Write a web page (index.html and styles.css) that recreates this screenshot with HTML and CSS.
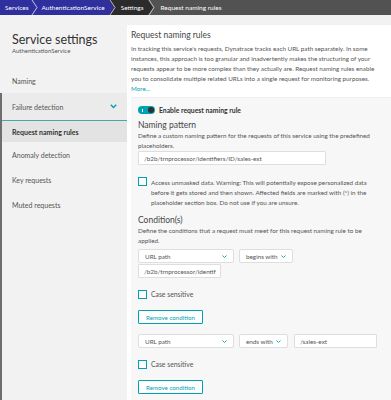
FILE: index.html
```html
<!DOCTYPE html>
<html lang="en">
<head>
  <meta charset="UTF-8">
  <title>Request naming rules</title>
  <link rel="stylesheet" href="styles.css">
</head>
<body>

  <!-- Breadcrumbs -->
  <div class="crumbs">
    <span class="crumb crumb-blue crumb-first">Services</span>
    <svg class="sep" width="8" height="15" viewBox="0 0 8 15"><rect width="8" height="15" fill="#2f2f9e"/><polyline points="1,0 6,7.5 1,15" fill="none" stroke="#d6d6f0" stroke-width="0.9"/></svg>
    <span class="crumb crumb-blue">AuthenticationService</span>
    <svg class="sep" width="9" height="15" viewBox="0 0 9 15"><rect width="9" height="15" fill="#2b2b2b"/><polygon points="0,0 2,0 7,7.5 2,15 0,15" fill="#2f2f9e"/><polyline points="3,0 8,7.5 3,15" fill="none" stroke="#cfcfcf" stroke-width="0.9"/></svg>
    <span class="crumb crumb-dark">Settings</span>
    <svg class="sep" width="9" height="15" viewBox="0 0 9 15"><rect width="9" height="15" fill="#525252"/><polygon points="0,0 2,0 7,7.5 2,15 0,15" fill="#2b2b2b"/><polyline points="3,0 8,7.5 3,15" fill="none" stroke="#cfcfcf" stroke-width="0.9"/></svg>
    <span class="crumb crumb-gray">Request naming rules</span>
  </div>

  <div class="page">
    <aside class="sidebar">
      <div class="side-head">
        <h1>Service settings</h1>
        <div class="side-sub">AuthenticationService</div>
      </div>
      <div class="side-item side-first">Naming</div>
      <div class="side-rest">
        <div class="side-item side-group">
          Failure detection
          <svg width="7" height="5" viewBox="0 0 7 5"><polyline points="0.8,0.8 3.5,3.6 6.2,0.8" fill="none" stroke="#00a1b2" stroke-width="1.4"/></svg>
        </div>
        <div class="side-item side-active">Request naming rules</div>
        <div class="side-item">Anomaly detection</div>
        <div class="side-item">Key requests</div>
        <div class="side-item">Muted requests</div>
      </div>
    </aside>

    <main class="card">
      <h2>Request naming rules</h2>
      <p class="intro">In tracking this service's requests, Dynatrace tracks each URL path separately. In some instances, this approach is too granular and inadvertently makes the structuring of your requests appear to be more complex than they actually are. Request naming rules enable you to consolidate multiple related URLs into a single request for monitoring purposes.<br><a class="more" href="#">More...</a></p>

      <div class="rule">
        <div class="toggle-row">
          <span class="toggle"><span class="knob"></span></span>
          <span class="toggle-label">Enable request naming rule</span>
        </div>

        <h3>Naming pattern</h3>
        <p class="desc">Define a custom naming pattern for the requests of this service using the predefined placeholders.</p>
        <div class="field field-pattern">/b2b/trnprocessor/identifiers/ID/sales-ext</div>

        <div class="check-row check-unmasked">
          <span class="box"></span>
          <span class="check-text">Access unmasked data. Warning: This will potentially expose personalized data before it gets stored and then shown. Affected fields are marked with (*) in the placeholder section box. Do not use if you are unsure.</span>
        </div>

        <h3 class="cond-title">Condition(s)</h3>
        <p class="desc">Define the conditions that a request must meet for this request naming rule to be applied.</p>

        <div class="cond-row">
          <div class="select select-attr">URL path <svg width="5" height="3" viewBox="0 0 5 3"><polyline points="0.5,0.5 2.5,2.5 4.5,0.5" fill="none" stroke="#00a1b2" stroke-width="0.9"/></svg></div>
          <div class="select select-op">begins with <svg width="5" height="3" viewBox="0 0 5 3"><polyline points="0.5,0.5 2.5,2.5 4.5,0.5" fill="none" stroke="#00a1b2" stroke-width="0.9"/></svg></div>
        </div>
        <div class="field field-value">/b2b/trnprocessor/identif</div>

        <div class="check-row check-case">
          <span class="box"></span>
          <span class="check-text">Case sensitive</span>
        </div>
        <button class="remove">Remove condition</button>

        <div class="cond-row cond-second">
          <div class="select select-attr">URL path <svg width="5" height="3" viewBox="0 0 5 3"><polyline points="0.5,0.5 2.5,2.5 4.5,0.5" fill="none" stroke="#00a1b2" stroke-width="0.9"/></svg></div>
          <div class="select select-op2">ends with <svg width="5" height="3" viewBox="0 0 5 3"><polyline points="0.5,0.5 2.5,2.5 4.5,0.5" fill="none" stroke="#00a1b2" stroke-width="0.9"/></svg></div>
          <div class="field field-inline">/sales-ext</div>
        </div>

        <div class="check-row check-case">
          <span class="box"></span>
          <span class="check-text">Case sensitive</span>
        </div>
        <button class="remove">Remove condition</button>
      </div>
    </main>
  </div>

</body>
</html>
```

FILE: styles.css
```css
body {
  margin: 0;
  height: 400px;
  overflow: hidden;
  font-family: 'Lato', sans-serif;
  font-size: 6.5px;
  background-color: #f2f2f2;
  color: #555;
}

/* breadcrumbs */
.crumbs {
  display: flex;
  height: 15px;
  background-color: #525252;
  color: #fff;
}

.crumb {
  display: flex;
  align-items: center;
  padding: 0 2px 0 3px;
}

.crumb-first {
  padding-left: 5px;
}

.crumb-blue {
  background-color: #2f2f9e;
}

.crumb-dark {
  background-color: #2b2b2b;
  padding: 0 3px 0 5px;
}

.crumb-gray {
  padding-left: 5px;
}

.sep {
  display: block;
  flex-shrink: 0;
}

/* layout */
.page {
  display: flex;
  height: 385px;
}

.sidebar {
  width: 127px;
  flex-shrink: 0;
  display: flex;
  flex-direction: column;
}

.side-head {
  padding: 18px 0 0 12px;
}

.side-head h1 {
  margin: 0;
  font-size: 12.5px;
  line-height: 14px;
  font-weight: 400;
  color: #333;
}

.side-sub {
  font-size: 6px;
  line-height: 8px;
  color: #555;
}

.side-item {
  display: flex;
  align-items: center;
  height: 25px;
  padding: 0 10px 0 12px;
  font-size: 7px;
  color: #555;
}

.side-first {
  margin-top: 13px;
}

.side-rest {
  flex: 1;
  border-left: 2px solid #6e6e6e;
}

.side-rest .side-item {
  padding-left: 10px;
}

.side-group {
  height: 27px;
  justify-content: space-between;
  background-color: #ebebeb;
  border-bottom: 1px solid #4aa5b3;
}

.side-active {
  height: 21px;
  background-color: #e3e3e3;
  font-weight: bold;
  color: #333;
}

/* main card */
.card {
  flex: 1;
  margin-top: 10px;
  padding: 4px 0 0 4px;
  background-color: #fff;
  font-size: 6.3px;
}

.card h2 {
  margin: 0 0 3px;
  font-size: 8.5px;
  line-height: 12px;
  font-weight: 400;
  color: #454646;
}

.intro {
  margin: 0;
  padding-right: 6px;
  line-height: 10px;
}

.more {
  color: #00a1b2;
  text-decoration: none;
}

.rule {
  margin-top: 3px;
  padding: 8px 10px 10px 7px;
  background-color: #f7f7f7;
  border-top: 1px solid #efefef;
}

.toggle-row {
  display: flex;
  align-items: center;
  gap: 4px;
  height: 8px;
}

.toggle {
  display: flex;
  align-items: center;
  justify-content: space-between;
  width: 17px;
  height: 8px;
  padding: 0 1px 0 4px;
  box-sizing: border-box;
  border-radius: 4px;
  background-color: #00a1b2;
}

.toggle::before {
  content: "";
  width: 1px;
  height: 3px;
  background-color: #fff;
}

.knob {
  width: 6px;
  height: 6px;
  border-radius: 50%;
  background-color: #2f2f2f;
}

.toggle-label {
  font-size: 6.8px;
  font-weight: bold;
  color: #333;
}

.rule h3 {
  margin: 6px 0 1px;
  font-size: 8.5px;
  line-height: 10px;
  font-weight: 400;
  color: #454646;
}

.rule .cond-title {
  margin-top: 7px;
}

.desc {
  margin: 0;
  line-height: 10px;
}

.field {
  box-sizing: border-box;
  height: 14px;
  display: flex;
  align-items: center;
  padding-left: 5px;
  background-color: #fff;
  border: 1px solid #dedede;
  border-radius: 1px;
  color: #555;
}

.field-pattern {
  width: 188px;
}

.field-value {
  width: 83px;
  margin-top: 1px;
}

.field-inline {
  width: 83px;
  margin-left: 1px;
}

.check-row {
  display: flex;
  align-items: flex-start;
  gap: 4px;
}

.check-unmasked {
  margin-top: 12px;
}

.check-case {
  margin-top: 12px;
}

.box {
  flex-shrink: 0;
  width: 9px;
  height: 9px;
  box-sizing: border-box;
  border: 1px solid #00a1b2;
  background-color: #fff;
}

.check-text {
  margin-top: 1px;
  line-height: 10px;
}

.check-case .check-text {
  margin-top: 0;
  line-height: 9px;
  font-size: 6.8px;
}

.cond-row {
  display: flex;
  gap: 5px;
  margin-top: 3px;
}

.cond-second {
  margin-top: 10px;
}

.select {
  box-sizing: border-box;
  height: 14px;
  display: flex;
  align-items: center;
  justify-content: space-between;
  padding: 0 6px;
  background-color: #fff;
  border: 1px solid #dedede;
  border-radius: 2px;
  color: #555;
}

.select-attr {
  width: 96px;
}

.select-op {
  width: 54px;
}

.select-op2 {
  width: 49px;
}

.remove {
  display: block;
  margin-top: 11px;
  width: 65px;
  height: 14px;
  padding: 0;
  font-family: 'Lato', sans-serif;
  font-size: 6.2px;
  color: #00a1b2;
  background-color: #fff;
  border: 1px solid #00a1b2;
  border-radius: 1px;
}
```
